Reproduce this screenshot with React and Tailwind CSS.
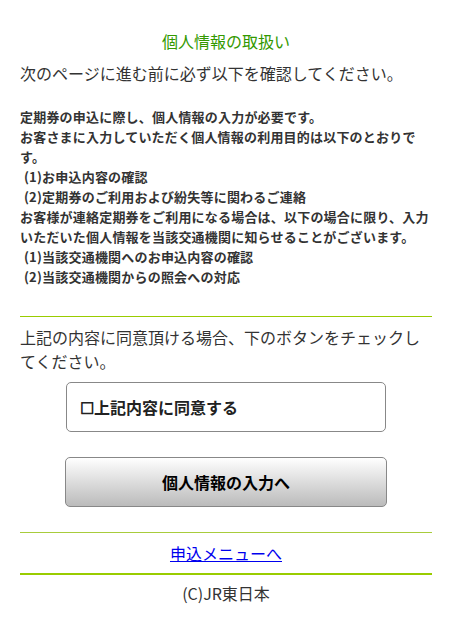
import React from 'react';

const App = () => {
  return (
    <div className="min-h-[636px] bg-white px-5 pt-[29px] pb-8 text-[#333] text-base leading-6" style={{ fontFamily: '"Noto Sans CJK JP", "Noto Sans", sans-serif' }}>
      <h1 className="text-center text-base font-normal text-[#339900]">個人情報の取扱い</h1>
      <p className="mt-2">次のページに進む前に必ず以下を確認してください。</p>

      <div className="mt-[22px] text-[13px] leading-5 font-bold tracking-[0.2px]">
        <p>定期券の申込に際し、個人情報の入力が必要です。</p>
        <p>お客さまに入力していただく個人情報の利用目的は以下のとおりです。</p>
        <p className="pl-1">(1)お申込内容の確認</p>
        <p className="pl-1">(2)定期券のご利用および紛失等に関わるご連絡</p>
        <p>お客様が連絡定期券をご利用になる場合は、以下の場合に限り、入力いただいた個人情報を当該交通機関に知らせることがございます。</p>
        <p className="pl-1">(1)当該交通機関へのお申込内容の確認</p>
        <p className="pl-1">(2)当該交通機関からの照会への対応</p>
      </div>

      <hr className="mt-[29px] border-0 border-t border-[#99cc00]" />

      <p className="mt-2">上記の内容に同意頂ける場合、下のボタンをチェックしてください。</p>

      <div className="mt-[9px] flex flex-col items-center gap-[25px]">
        <label className="flex h-[50px] w-[320px] items-center rounded-[5px] border border-[#888] bg-white pl-[13px] text-base font-bold text-[#222]">
          <span>☐上記内容に同意する</span>
        </label>
        <button className="h-[50px] w-[322px] rounded-[5px] border border-[#888] bg-gradient-to-b from-white to-[#bbbbbb] text-base font-bold text-black">
          個人情報の入力へ
        </button>
      </div>

      <hr className="mt-[25px] border-0 border-t border-[#a8cc3c]" />
      <div className="py-2 text-center">
        <a href="#" className="text-[#0000ee] underline">申込メニューへ</a>
      </div>
      <hr className="border-0 border-t-2 border-[#99cc00]" />
      <p className="mt-[6px] text-center">(C)JR東日本</p>
    </div>
  );
};

export default App;
